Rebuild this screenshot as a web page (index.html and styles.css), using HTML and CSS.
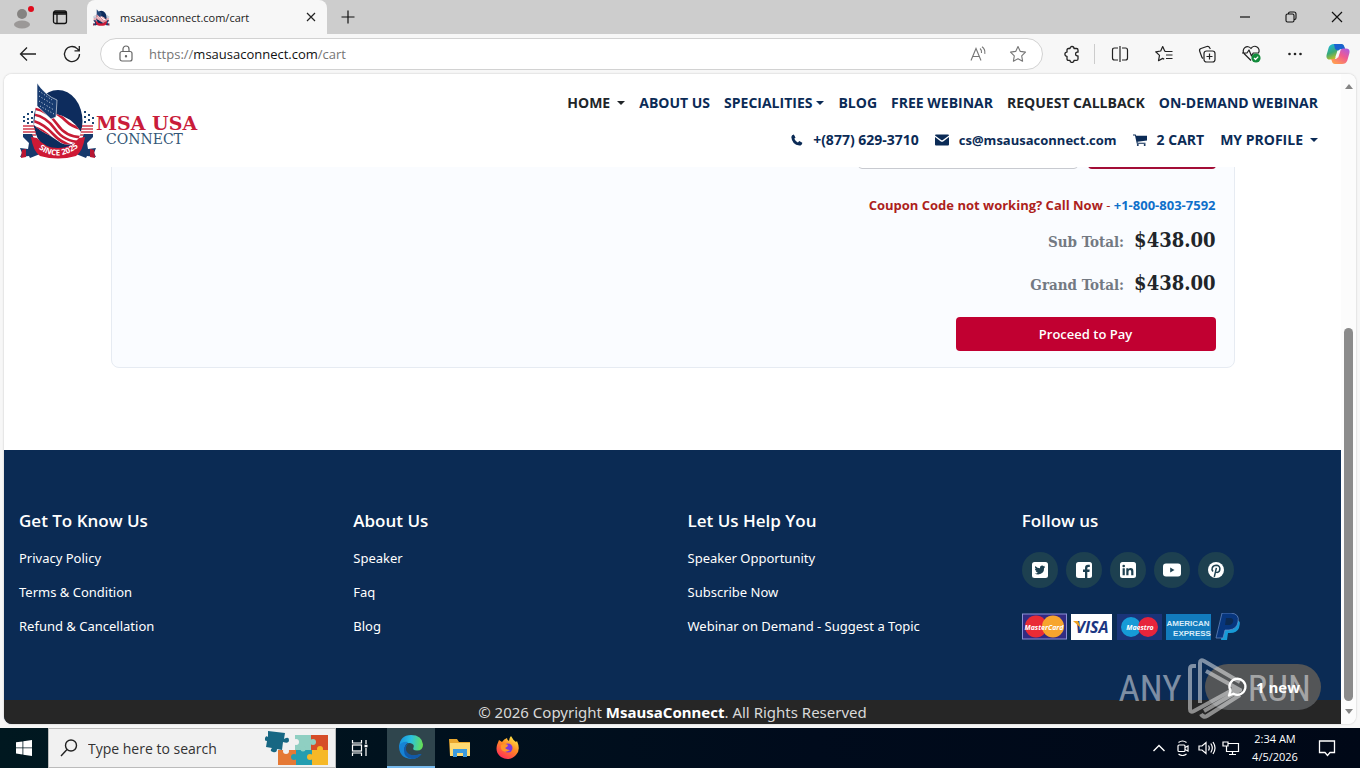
FILE: index.html
```html
<!DOCTYPE html>
<html lang="en">
<head>
<meta charset="utf-8">
<title>msausaconnect.com/cart</title>
<link rel="stylesheet" href="styles.css">
</head>
<body>
<div class="tabstrip">
  <button class="profile" aria-label="Profile"><svg width="28" height="28" viewBox="0 0 28 28"><circle cx="14" cy="11" r="5" fill="#858381"/><ellipse cx="14" cy="21.500" rx="8" ry="4" fill="#9b9897"/><circle cx="23" cy="6" r="3" fill="#e00b1c"/></svg></button>
  <button class="workspace" aria-label="Tab actions"><svg width="16" height="16" viewBox="0 0 16 16" fill="none" stroke="#111" stroke-width="1.300"><rect x="1.500" y="2" width="13" height="12.500" rx="2"/><path d="M1.500 5h13M5 5v9" /><path d="M2 3.500h12" stroke-width="2"/></svg></button>
  <div class="tab">
    <svg width="17" height="17" viewBox="0 0 78 76"><use href="#emblem"/></svg>
    <span class="tab-title">msausaconnect.com/cart</span>
    <button class="tab-close" aria-label="Close tab"><svg width="16" height="16" viewBox="0 0 16 16" stroke="#222" stroke-width="1.200"><path d="M4 4l8 8M12 4l-8 8"/></svg></button>
  </div>
  <button class="newtab" aria-label="New tab"><svg width="16" height="16" viewBox="0 0 16 16" stroke="#111" stroke-width="1.200"><path d="M8 1.500v13M1.500 8h13"/></svg></button>
  <div class="window-buttons">
    <button aria-label="Minimize"><svg width="12" height="12" viewBox="0 0 12 12" stroke="#111" stroke-width="1.200"><path d="M1 6h10"/></svg></button>
    <button aria-label="Restore"><svg width="12" height="12" viewBox="0 0 12 12" fill="none" stroke="#111" stroke-width="1.100"><rect x="1" y="3" width="8" height="8" rx="1.500"/><path d="M3.500 3V2.500A1.500 1.500 0 0 1 5 1h4a2 2 0 0 1 2 2v4a1.500 1.500 0 0 1-1.500 1.500H9"/></svg></button>
    <button aria-label="Close"><svg width="12" height="12" viewBox="0 0 12 12" stroke="#111" stroke-width="1.200"><path d="M1 1l10 10M11 1L1 11"/></svg></button>
  </div>
</div>

<div class="toolbar">
  <button class="nav-button" aria-label="Back"><svg width="20" height="20" viewBox="0 0 20 20" fill="none" stroke="#222" stroke-width="1.300"><path d="M18 10H2.500M9 3.500L2.500 10 9 16.500"/></svg></button>
  <button class="nav-button" aria-label="Refresh"><svg width="20" height="20" viewBox="0 0 20 20" fill="none" stroke="#222" stroke-width="1.300"><path d="M17.500 10a7.500 7.500 0 1 1-2.300-5.400L17 6.500M17.300 2v4.800h-4.800"/></svg></button>
  <div class="address">
    <svg class="lock" width="16" height="18" viewBox="0 0 16 18" fill="none" stroke="#666" stroke-width="1.200"><rect x="2" y="6.500" width="12" height="9.500" rx="2"/><path d="M5 6.500V4a3 3 0 0 1 6 0v2.500"/><circle cx="8" cy="11.200" r=".6" fill="#666"/></svg>
    <a class="url" href="#"><span>https://</span>msausaconnect.com<span>/cart</span></a>
    <button aria-label="Read aloud"><svg width="18" height="18" viewBox="0 0 18 18" fill="none" stroke="#767676" stroke-width="1.100"><path d="M2 15.500L7 3.500l5 12M3.700 11.500h6.600M11 3.500q2 1.500 1.500 4.500M13 1.800q3.500 2.500 2.800 7"/></svg></button>
    <button aria-label="Add to favorites"><svg width="18" height="18" viewBox="0 0 18 18" fill="none" stroke="#767676" stroke-width="1.100" stroke-linejoin="round"><path d="M9 1.500l2.300 4.900 5.200.7-3.800 3.700.9 5.400L9 13.700l-4.600 2.500.9-5.400L1.500 7.100l5.200-.7z"/></svg></button>
  </div>
  <button class="extensions" aria-label="Extensions"><svg width="18" height="18" viewBox="0 0 18 18" fill="none" stroke="#222" stroke-width="1.300" stroke-linejoin="round"><path d="M5.500 3.500H7a2 2 0 0 1 4 0h2.500q1.500 0 1.500 1.500v2.200h-1a1.900 1.900 0 0 0 0 3.700h1v3q0 1.500-1.500 1.500H11a2 2 0 0 1-4 0H5.500Q4 15.400 4 14v-2.700a2 2 0 0 1 0-4.200V5q0-1.500 1.500-1.500z"/></svg></button>
  <div class="tools">
    <button aria-label="Split screen"><svg width="18" height="18" viewBox="0 0 18 18" fill="none" stroke="#222" stroke-width="1.200"><path d="M7 3H3.500Q1.500 3 1.500 5v8q0 2 2 2H7M11 3h3.500q2 0 2 2v8q0 2-2 2H11M9 1v16" /></svg></button>
    <button aria-label="Favorites"><svg width="18" height="18" viewBox="0 0 18 18" fill="none" stroke="#222" stroke-width="1.200" stroke-linejoin="round"><path d="M17.500 6.500h-7L9.700 6 7.700 1.500 5.700 6l-5 .8L4.500 10.400l-1 5.300 4.200-2.300 1.500.8M11 10h6.500M11 13.500h6.500"/></svg></button>
    <button aria-label="Collections"><svg width="18" height="18" viewBox="0 0 18 18" fill="none" stroke="#222" stroke-width="1.200"><rect x="6" y="6" width="11" height="11" rx="2.500"/><path d="M11.500 8.500v6M8.500 11.500h6M4 12.500L1.700 6.200Q1 4.300 3 3.500l5.800-2q2-.7 2.900 1.300L12.300 4M5 13.500l-1-1"/></svg></button>
    <button aria-label="Browser essentials"><svg width="20" height="20" viewBox="0 0 20 20" fill="none" stroke="#222" stroke-width="1.200" stroke-linejoin="round"><path d="M10 16.500L3 9.500A4.300 4.300 0 0 1 10 4.500a4.300 4.300 0 0 1 7.500 4.500M1 9h5L8 6l2.500 6 1.700-3H18"/><circle cx="15" cy="14" r="4.600" fill="#138b3b" stroke="none"/><path d="M13 14l1.500 1.500L17.200 12.600" stroke="#fff"/></svg></button>
    <button aria-label="Settings and more"><svg width="16" height="16" viewBox="0 0 16 16" fill="#222"><circle cx="3.500" cy="8" r="1.300"/><circle cx="9" cy="8" r="1.300"/><circle cx="14.500" cy="8" r="1.300"/></svg></button>
    <button aria-label="Copilot"><svg width="24" height="24" viewBox="0 0 24 24"><defs><linearGradient id="cpa" x1="0" y1="0" x2=".5" y2="1"><stop stop-color="#18b9ed"/><stop offset=".55" stop-color="#3aa976"/><stop offset="1" stop-color="#d9c318"/></linearGradient><linearGradient id="cpb" x1="1" y1="0" x2=".3" y2="1"><stop stop-color="#a55be9"/><stop offset=".5" stop-color="#f05a91"/><stop offset="1" stop-color="#ff9b52"/></linearGradient></defs><path d="M8 2h7q2.500 0 3.200 3l.6 2h-4q-2 0-2.700 2.200L10 15q-.8 2.500-3 2.500H4q-4.500 0-3.300-5l2-7Q4 2 8 2z" fill="url(#cpa)"/><path d="M8 2h7.500q2.200 0 2.900 2.800L19 7h-4q-2 0-2.800 2L9 7z" fill="#1a62d0"/><path d="M16 22H9q-2.500 0-3.200-3l-.6-2h4q2 0 2.700-2.200L14 9q.8-2.500 3-2.500h3q4.500 0 3.300 5l-2 7Q20 22 16 22z" fill="url(#cpb)"/><path d="M11.500 8.500h3l-2.300 7h-3z" fill="#f7f7f7"/></svg></button>
  </div>
</div>

<div class="viewport">
  <div class="page">
    <header class="site-header">
      <a class="logo" href="#" aria-label="MSA USA Connect">
        <svg width="180" height="76" viewBox="0 0 180 76">
          <defs>
            <clipPath id="flagclip"><path d="M16 22Q24 23 36 31 52 34 61 49L58 58Q50 64 41 60L29 52Q20 48 14 42z"/></clipPath>
            <g id="emblem">
              <ellipse cx="38" cy="38" rx="24.500" ry="31" fill="#0d2c5d"/>
              <g fill="#1d4775"><rect x="3" y="33" width="2" height="2"/><rect x="7" y="30" width="2" height="2"/><rect x="11" y="28" width="2" height="2"/><rect x="3" y="37" width="2" height="2"/><rect x="7" y="35" width="2" height="2"/><rect x="11" y="34" width="2" height="2"/><rect x="7" y="39" width="2" height="2"/><rect x="11" y="38" width="2" height="2"/><rect x="64" y="28" width="2" height="2"/><rect x="68" y="31" width="2" height="2"/><rect x="72" y="34" width="2" height="2"/><rect x="64" y="33" width="2" height="2"/><rect x="68" y="36" width="2" height="2"/><rect x="72" y="39" width="2" height="2"/><rect x="64" y="38" width="2" height="2"/></g>
              <path d="M3 43h11M3 46h12M3 49h13M3 52h13M62 43h11M61 46h12M60 49h13M60 52h13" stroke="#cf3c4e" stroke-width="1.500"/>
              <path d="M16 22Q24 23 36 31 52 34 61 49L58 58Q50 64 41 60L29 52Q20 48 14 42z" fill="#fff"/>
              <g clip-path="url(#flagclip)" fill="none" stroke="#c71c35" stroke-width="2.600"><path d="M10 25Q27 26 37 41T66 54M10 31Q25 32 35 46T64 59M9 37Q22 39 33 51T62 65M28 26Q39 31 46 38T67 47M9 43Q22 45 32 56T55 68"/></g>
              <path d="M17 0Q26 13 37 17L36 34 31 36 17 23z" fill="#173b70" stroke="#fff" stroke-width=".6"/>
              <path d="M19 8l13 9M19 13l15 9M19 18l15 9M20 23l14 8" stroke="#d4deea" stroke-width="1" stroke-dasharray="1 2"/>
              <path d="M0 65l8 1 1-6-6-6v-3h9l8 20-10 4-1-2-9 1 2-4zM76 65l-8 1-1-6 6-6v-3h-9l-8 20 10 4 1-2 9 1-2-4z" fill="#17396c"/>
              <path d="M11 54l6 1q8 10 21 10t21-10l6-1q-2 14-9 19-18 5-36 0-7-5-9-19z" fill="#ce1935"/>
              <path d="M2 67l4-1v8l-5 1zM70 66l4 1 1 8-5-1z" fill="#b81532"/>
            </g>
          </defs>
          <use href="#emblem"/>
          <path id="sincearc" d="M12 60Q38 86 65 58" fill="none"/>
          <text class="logo-since"><textPath href="#sincearc" startOffset="50%">SINCE 2025</textPath></text>
          <text class="logo-name" x="76" y="47">MSA USA</text>
          <text class="logo-sub" x="86" y="61">CONNECT</text>
        </svg>
      </a>
      <nav class="menus">
        <div class="menu">
          <a class="dark" href="#">HOME <i class="caret spaced"></i></a>
          <a href="#">ABOUT US</a>
          <a href="#">SPECIALITIES<i class="caret"></i></a>
          <a href="#">BLOG</a>
          <a href="#">FREE WEBINAR</a>
          <a class="dark" href="#">REQUEST CALLBACK</a>
          <a href="#">ON-DEMAND WEBINAR</a>
        </div>
        <div class="menu contact">
          <a href="#"><svg width="12" height="12" viewBox="0 0 12 12"><path d="M2.800.5l1.700 3-1.200 1.200q.9 2.200 3.600 3.700l1.400-1.300 3 1.700q-.2 2.800-2.900 2.800Q1 10.500.3 2.900.7.800 2.800.5z" fill="currentColor"/></svg>+(877) 629-3710</a>
          <a class="email" href="#"><svg width="14" height="12" viewBox="0 0 14 12" fill="currentColor"><path d="M1 .5h12q1 0 1 1L7.800 6q-.8.600-1.600 0L0 1.600Q0 .5 1 .5zM0 3l5.500 4.200q1.500 1 3 0L14 3v7.500q0 1-1 1H1q-1 0-1-1z"/></svg>cs@msausaconnect.com</a>
          <a href="#"><svg width="14" height="12" viewBox="0 0 14 12" fill="currentColor"><path d="M0 .5h2.700l.5 1.300H14v4.700L4.500 7.700l.2 1h7.800v1H3.800L2 1.600H0z"/><circle cx="4.800" cy="11" r="1"/><circle cx="11.700" cy="11" r="1"/></svg>2 CART</a>
          <a href="#">MY PROFILE <i class="caret spaced"></i></a>
        </div>
      </nav>
    </header>

    <main class="cart">
      <section class="summary">
        <div class="coupon"><input type="text" aria-label="Coupon code"><button aria-label="Apply coupon"></button></div>
        <p class="help">Coupon Code not working? Call Now <span>-</span> <a href="#">+1-800-803-7592</a></p>
        <p class="total"><span>Sub Total:</span><b>$438.00</b></p>
        <p class="total"><span>Grand Total:</span><b>$438.00</b></p>
        <button class="pay">Proceed to Pay</button>
      </section>
    </main>

    <footer class="site-footer">
      <div class="columns">
        <section><h2>Get To Know Us</h2><ul><li><a href="#">Privacy Policy</a></li><li><a href="#">Terms &amp; Condition</a></li><li><a href="#">Refund &amp; Cancellation</a></li></ul></section>
        <section><h2>About Us</h2><ul><li><a href="#">Speaker</a></li><li><a href="#">Faq</a></li><li><a href="#">Blog</a></li></ul></section>
        <section><h2>Let Us Help You</h2><ul><li><a href="#">Speaker Opportunity</a></li><li><a href="#">Subscribe Now</a></li><li><a href="#">Webinar on Demand - Suggest a Topic</a></li></ul></section>
        <section>
          <h2>Follow us</h2>
          <div class="social">
            <a href="#" aria-label="Twitter"><svg width="16" height="16" viewBox="0 0 16 16"><rect width="16" height="16" rx="2.500" fill="#fff"/><path d="M13.200 5q-.5.700-1.100 1.100.1 5.900-5.900 6.400-2 0-3.500-.9 1.800.1 3.100-.9-1.600-.2-2.100-1.600h.9Q3 8.500 2.900 6.800l1 .3Q2.300 5.700 3.300 4q2 2.200 4.700 2.300Q7.800 3.600 10.200 3.500q.9 0 1.500.7l1.400-.5-.9 1.200z" fill="#1d4050"/></svg></a>
            <a href="#" aria-label="Facebook"><svg width="16" height="16" viewBox="0 0 16 16"><rect width="16" height="16" rx="2.500" fill="#fff"/><path d="M9 16V10H7V7.600h2V6q0-3.200 3-3.200h1.800V5h-1.300q-1.200 0-1.200 1.200v1.400h2.400l-.3 2.400h-2.100v6z" fill="#1d4050"/></svg></a>
            <a href="#" aria-label="LinkedIn"><svg width="16" height="16" viewBox="0 0 16 16"><rect width="16" height="16" rx="2.500" fill="#fff"/><g fill="#1d4050"><circle cx="3.700" cy="4" r="1.300"/><path d="M2.600 6.200h2.200v7H2.600zM6.300 6.200h2.200v1q.7-1.200 2.200-1.200 2.700 0 2.700 3.200v4h-2.200V9.600q0-1.700-1.200-1.700-1.500 0-1.500 1.800v3.500H6.300z"/></g></svg></a>
            <a href="#" aria-label="YouTube"><svg width="20" height="16" viewBox="0 0 20 16"><rect x="1" y="1.500" width="18" height="13" rx="3" fill="#fff"/><path d="M8.200 5.500v5l4.300-2.500z" fill="#1d4050"/></svg></a>
            <a href="#" aria-label="Pinterest"><svg width="16" height="16" viewBox="0 0 16 16"><circle cx="8" cy="8" r="8" fill="#fff"/><path d="M5 9.500Q3.400 7.600 4.300 5.600 5.400 3.300 8.300 3.300q3.400.2 3.600 3.400-.2 3.600-2.800 3.700-1.200 0-1.700-.9M8.400 5.800L6.300 14.800" fill="none" stroke="#1d4050" stroke-width="1.500"/></svg></a>
          </div>
          <svg class="cards" width="220" height="28" viewBox="0 0 220 28" role="img" aria-label="Accepted payment methods">
            <rect x=".5" y="1" width="44" height="25" fill="#332b83" stroke="#8c90d5"/><circle cx="14" cy="13.500" r="11" fill="#e92b35"/><circle cx="31" cy="13.500" r="11" fill="#f7a52d"/><text class="card-master" x="22" y="17">MasterCard</text>
            <rect x="49" y="1" width="41" height="26" fill="#fff"/><text class="card-visa" x="70" y="20">VISA</text><path d="M51 8h5l3 7z" fill="#f0a321"/>
            <rect x="95" y="1" width="45" height="26" fill="#1a3479"/><circle cx="109" cy="14" r="10" fill="#169bd7"/><circle cx="126" cy="14" r="10" fill="#e7243b"/><text class="card-maestro" x="118" y="17">Maestro</text>
            <rect x="144" y="1" width="45" height="26" fill="#127bbd"/><text class="card-amex" x="166" y="13">AMERICAN</text><text class="card-amex" x="170" y="23">EXPRESS</text>
            <path d="M202 5h10q8 2 5 10-2 5-9 5h-2l-1 7h-6z" fill="#179bd7"/><path d="M200 0h9q9 1 7 9-1 7-9 8h-4l-2 8h-7z" fill="#07367e" stroke="#6e91c9" stroke-width=".7"/><path d="M204 5h4q4 0 3 4-1 3-4 3h-4z" fill="#0c2a52"/>
          </svg>
        </section>
      </div>
      <p class="copyright">© 2026 Copyright <b>MsausaConnect</b>. All Rights Reserved</p>
    </footer>

    <button class="chat"><svg width="22" height="22" viewBox="0 0 22 22" fill="none" stroke="#fff" stroke-width="2.300"><path d="M3 19.500l1.500-4.800a8 8 0 1 1 3 3z" stroke-linejoin="round"/></svg>1 new</button>
    <div class="watermark">
      <span>ANY</span>
      <svg width="54" height="62" viewBox="0 0 54 62" fill="none" stroke="currentColor" stroke-width="4"><path d="M8 8H5q-3 0-3 3v40q0 4 4 2L48 30M12 45V5q0-4 4-2l36 21M18 13l34 19-36 21M13 56q2 4 6 2L52 37"/></svg>
      <span>RUN</span>
    </div>
  </div>
  <div class="scrollbar"><i class="up"></i><i class="thumb"></i><i class="down"></i></div>
</div>

<div class="taskbar">
  <button class="task" aria-label="Start"><svg width="16" height="16" viewBox="0 0 16 16" fill="#fff"><path d="M0 2.300l6.500-.9v6.100H0zM7.300 1.300L16 0v7.500H7.300zM0 8.300h6.500v6.200L0 13.600zM7.300 8.300H16V16l-8.700-1.300z"/></svg></button>
  <label class="search">
    <svg width="18" height="18" viewBox="0 0 18 18" fill="none" stroke="#222" stroke-width="1.400"><circle cx="11" cy="6.500" r="5.500"/><path d="M7 10.500L1 17"/></svg>
    <input type="text" placeholder="Type here to search" aria-label="Type here to search">
    <svg class="puzzle" width="64" height="36" viewBox="0 0 64 36">
      <path d="M30 5h16v15H30z" fill="#8fcfc2"/><path d="M46 5h17v15H46z" fill="#d64d28"/><path d="M13 20h18v15H13z" fill="#e57935"/><path d="M31 20h16v15H31z" fill="#249db0"/><path d="M47 20h16v15H47z" fill="#f6b827"/>
      <circle cx="48" cy="12" r="3" fill="#8fcfc2"/><circle cx="38" cy="19" r="2.500" fill="#8fcfc2"/><circle cx="29" cy="27" r="3" fill="#249db0"/><circle cx="45" cy="27" r="3" fill="#f6b827"/><circle cx="55" cy="19" r="3" fill="#f6b827"/><circle cx="31" cy="12" r="3" fill="#f1f1f1"/><circle cx="21" cy="21" r="3" fill="#f1f1f1"/>
      <path d="M3 1l17 2-1 6q5-3 5 1t-6 2l-1 8-5-1q0 4-4 3t-1-4l-6-1 1-6q-3 0-2-3t3-1z" fill="#176783"/>
    </svg>
  </label>
  <button class="task" aria-label="Task view"><svg width="18" height="18" viewBox="0 0 18 18" fill="none" stroke="#fff" stroke-width="1.200"><path d="M1.500 1v3h9V1M1.500 17v-3h9v3M15 1v4M15 9v8"/><rect x="1.500" y="6" width="9" height="6"/><path d="M13.500 7h3" stroke-width="2.500"/></svg></button>
  <button class="task active" aria-label="Microsoft Edge"><svg width="24" height="24" viewBox="0 0 24 24"><defs><linearGradient id="eg" x1="0" y1=".3" x2="1" y2=".4"><stop stop-color="#168fe1"/><stop offset=".5" stop-color="#2bc2df"/><stop offset="1" stop-color="#66df55"/></linearGradient></defs><path d="M0 12Q1 0 12 0t12 9.500q0 6-6 6-5 0-3.500-3Q16 9 11 8 4 8 0 13z" fill="url(#eg)"/><path d="M0 11q3-5 9-4-6 6-2 11t15 1q-3 5-10 5Q0 23 0 11z" fill="#1683d5"/><path d="M10 8q-5 4-2 9t14 2q1 0 0 1-4 4-9 4-8-1-8-9 0-5 5-7z" fill="#1259a7"/></svg></button>
  <button class="task" aria-label="File Explorer"><svg width="22" height="20" viewBox="0 0 22 20"><path d="M0 1h8l2 3h11v14H1z" fill="#e9a72e"/><path d="M1 5h20v13H1z" fill="#ffda72"/><path d="M4 11h14v8h-4v-4H8v4H4z" fill="#3d9bdd"/></svg></button>
  <button class="task" aria-label="Firefox"><svg width="24" height="24" viewBox="0 0 24 24"><defs><linearGradient id="fx" x1=".8" y1="0" x2=".2" y2="1"><stop stop-color="#fff04a"/><stop offset=".45" stop-color="#ff8a24"/><stop offset="1" stop-color="#ff245c"/></linearGradient></defs><path d="M3 4l3 2q2-3 5-4 0 2 2 3 0-3 2-5 2 4 5 6l1-1q4 9-1 14-7 7-15 2Q-1 17 1 9z" fill="url(#fx)"/><circle cx="12" cy="12" r="4.500" fill="#7b38dc"/><path d="M5 9q4-2 7 0 0 2-3 3 2 2 5 2-4 3-7 1Q4 13 5 9z" fill="#ff9628"/></svg></button>
  <div class="tray">
    <button aria-label="Hidden icons"><svg width="16" height="16" viewBox="0 0 16 16" fill="none" stroke="#fff" stroke-width="1.400"><path d="M2.500 11L8 5.500 13.500 11"/></svg></button>
    <button aria-label="Meet now"><svg width="16" height="16" viewBox="0 0 16 16" fill="none" stroke="#fff" stroke-width="1.200"><rect x="3" y="5" width="7" height="6.500" rx="1"/><path d="M10 7.500l3-1.500v5l-3-1.500M3.500 2.500q4-3 8 0M3.500 14q4 3 8 0"/></svg></button>
    <button aria-label="Volume"><svg width="18" height="16" viewBox="0 0 18 16" fill="none" stroke="#fff" stroke-width="1.200"><path d="M1 6h3l4-3.500v11L4 10H1zM10.500 5.500q1.500 2.500 0 5M12.800 3.500q3 4.500 0 9M15 2q4 6 0 12"/></svg></button>
    <button aria-label="Network"><svg width="18" height="16" viewBox="0 0 18 16" fill="none" stroke="#fff" stroke-width="1.200"><path d="M6 3.500h10.500v8H4.500V6M7 14.500h7M10.500 11.500v3M1 2h5v4H1z"/></svg></button>
  </div>
  <div class="clock"><time>2:34 AM</time><time>4/5/2026</time></div>
  <button class="notice" aria-label="Notifications"><svg width="18" height="18" viewBox="0 0 18 18" fill="none" stroke="#fff" stroke-width="1.300"><path d="M1.500 2h15v11.500H12l-2.500 3-2.500-3H1.500z"/></svg></button>
</div>
</body>
</html>
```
FILE: styles.css
```css
* { box-sizing: border-box; }
html, body { height: 100%; }
body {
  margin: 0;
  display: flex;
  flex-direction: column;
  overflow: hidden;
  background: #f7f7f7;
  color: #212529;
  font-family: "Open Sans", "Noto Sans", sans-serif;
  font-size: 13px;
}
button { padding: 0; border: 0; background: none; font: inherit; color: inherit; display: grid; place-items: center; }
a { color: inherit; text-decoration: none; }
p, h2, ul { margin: 0; padding: 0; }
ul { list-style: none; }
svg { display: block; flex: none; }

.tabstrip { display: flex; flex: none; align-items: center; height: 34px; background: #cdcdcd; }
.profile { width: 44px; }
.workspace { width: 32px; }
.tab { display: flex; align-items: center; gap: 10px; width: 240px; height: 34px; margin-left: 11px; padding: 0 8px 0 6px; background: #f7f7f7; border-radius: 8px 8px 0 0; }
.tab-title { flex: 1; font-size: 11px; color: #1b1b1b; }
.newtab { width: 42px; height: 34px; }
.window-buttons { display: flex; margin-left: auto; }
.window-buttons button { width: 46px; height: 34px; }

.toolbar { display: flex; flex: none; align-items: center; height: 40px; padding: 0 10px 0 6px; }
.nav-button { width: 44px; height: 32px; }
.address { display: flex; flex: 1; align-items: center; height: 32px; margin-left: 6px; padding: 0 12px 0 17px; background: #fff; border: 1px solid #d2d2d2; border-radius: 16px; }
.address button { width: 24px; margin-left: 16px; }
.url { flex: 1; margin-left: 15px; font-size: 13px; color: #111; }
.url span { color: #757575; }
.extensions { width: 52px; padding-left: 6px; height: 20px; border-right: 1px solid #ccc; }
.tools { display: flex; justify-content: space-between; width: 242px; margin-left: 13px; }
.tools button { width: 24px; height: 24px; }

.viewport { display: flex; flex: 1; min-height: 0; margin: 0 4px 4px; overflow: hidden; border-radius: 8px; background: #fff; box-shadow: 0 0 2px #bbb; }
.page { position: relative; display: flex; flex: 1; flex-direction: column; min-width: 0; overflow: hidden; }
.scrollbar { display: flex; flex-direction: column; align-items: center; justify-content: space-between; width: 15px; padding: 10px 0; background: #fcfcfc; }
.thumb { width: 9px; height: 373px; margin-top: 230px; border-radius: 5px; background: #8b8b8b; }
.up, .down { border: 4px solid transparent; }
.up { border-top: 0; border-bottom: 5px solid #858585; }
.down { border-bottom: 0; border-top: 5px solid #858585; }

.site-header { position: relative; z-index: 1; display: flex; flex: none; justify-content: space-between; padding: 9px 23px 8px 16px; background: #fff; }
.menus { display: flex; flex-direction: column; gap: 15px; align-items: flex-end; padding-top: 9px; }
.menu { display: flex; gap: 14px; font-size: 14px; line-height: 22px; font-weight: 700; color: #0b2b56; }
.menu.contact { gap: 16px; }
.menu a { display: flex; align-items: center; white-space: nowrap; }
.menu .dark { color: #212529; }
.menu .email { font-size: 13px; }
.contact svg { margin-right: 10px; }
.caret { margin-left: 4px; border: 4px solid transparent; border-top-color: currentColor; border-bottom: 0; }
.caret.spaced { margin-left: 7px; }
.logo-name { font: bold 19px "DejaVu Serif", serif; fill: #c91c3a; }
.logo-sub { font: 14px "DejaVu Serif", serif; fill: #345777; }
.logo-since { font: bold 8px "Open Sans", sans-serif; fill: #fff; text-anchor: middle; }

.cart { flex: none; width: 1124px; max-width: 94%; margin: -48px auto 0; }
.summary { display: flex; flex-direction: column; align-items: flex-end; padding: 15px 18px 16px; background: #fafcff; border: 1px solid #e6ebf2; border-radius: 8px; }
.coupon { display: flex; gap: 10px; }
.coupon input { width: 220px; height: 34px; border: 1px solid #c8cad0; border-radius: 4px; }
.coupon button { width: 128px; height: 34px; border-radius: 4px; background: #a30d36; }
.help { margin-top: 25px; line-height: 22px; font-weight: 700; color: #ad1f1c; }
.help span { font-weight: 400; }
.help a { color: #0e6fca; }
.total { display: flex; gap: 10px; align-items: baseline; margin-top: 7px; line-height: 34px; font-family: "DejaVu Serif Condensed", "DejaVu Serif", serif; }
.total span { font-size: 15px; font-weight: 700; color: #737982; }
.total b { font-size: 20px; font-weight: 700; }
.pay { width: 260px; height: 34px; margin-top: 15px; border-radius: 4px; background: #c10031; color: #fff; font-weight: 600; }

.site-footer { display: flex; flex: 1; flex-direction: column; justify-content: space-between; margin-top: 82px; background: #0b2b54; color: #fff; }
.columns { display: grid; grid-template-columns: repeat(4, 1fr); padding-top: 58px; }
.columns section { padding: 0 15px; }
.columns h2 { font-size: 17px; line-height: 26px; font-weight: 600; }
.columns ul { padding-top: 7px; }
.columns li { font: 13px/34px "Noto Sans", sans-serif; }
.social { display: flex; gap: 8px; margin-top: 18px; }
.social a { display: grid; place-items: center; width: 36px; height: 36px; border-radius: 50%; background: #1d4050; }
.cards { margin-top: 25px; }
.card-master, .card-maestro { font: italic bold 7px "Open Sans", sans-serif; fill: #fff; text-anchor: middle; }
.card-visa { font: italic bold 16px "Open Sans", sans-serif; fill: #1b3682; text-anchor: middle; }
.card-amex { font: bold 8px "Liberation Sans", sans-serif; fill: #d8ecf8; text-anchor: middle; }
.copyright { background: #262626; color: #d9d9d9; font: 15px/24px "Noto Sans", sans-serif; text-align: center; }
.copyright b { color: #fff; }

.chat { position: absolute; right: 20px; bottom: 14px; display: flex; align-items: center; justify-content: center; gap: 8px; width: 116px; height: 46px; border-radius: 23px; background: #535557; color: #fff; font-size: 15px; font-weight: 700; }
.watermark { position: absolute; right: 30px; bottom: 4px; display: flex; align-items: center; gap: 6px; color: rgba(255, 255, 255, .48); font: 37px/62px "Liberation Sans Narrow", "Roboto Condensed", "Open Sans", sans-serif; pointer-events: none; }

.taskbar { display: flex; flex: none; height: 40px; background: linear-gradient(90deg, #001820, #000b1c 60%, #000817); color: #fff; }
.task { width: 48px; height: 40px; }
.task.active { margin: 0 1px 0 3px; background: #2f454d; border-bottom: 2px solid #76b9ed; }
.search { display: flex; align-items: center; width: 288px; padding: 0 6px 0 11px; background: #f1f1f1; border: 1px solid #bbb; }
.search input { flex: 1; min-width: 0; margin-left: 10px; padding: 0; border: 0; background: none; outline: 0; font: 14px "Open Sans", sans-serif; color: #333; }
.search input::placeholder { color: #333; opacity: 1; }
.tray { display: flex; align-items: center; margin-left: auto; }
.tray button { width: 24px; height: 40px; }
.clock { display: flex; flex-direction: column; justify-content: center; width: 64px; font-size: 11px; line-height: 18px; text-align: center; }
.notice { width: 40px; margin-right: 13px; }
```
